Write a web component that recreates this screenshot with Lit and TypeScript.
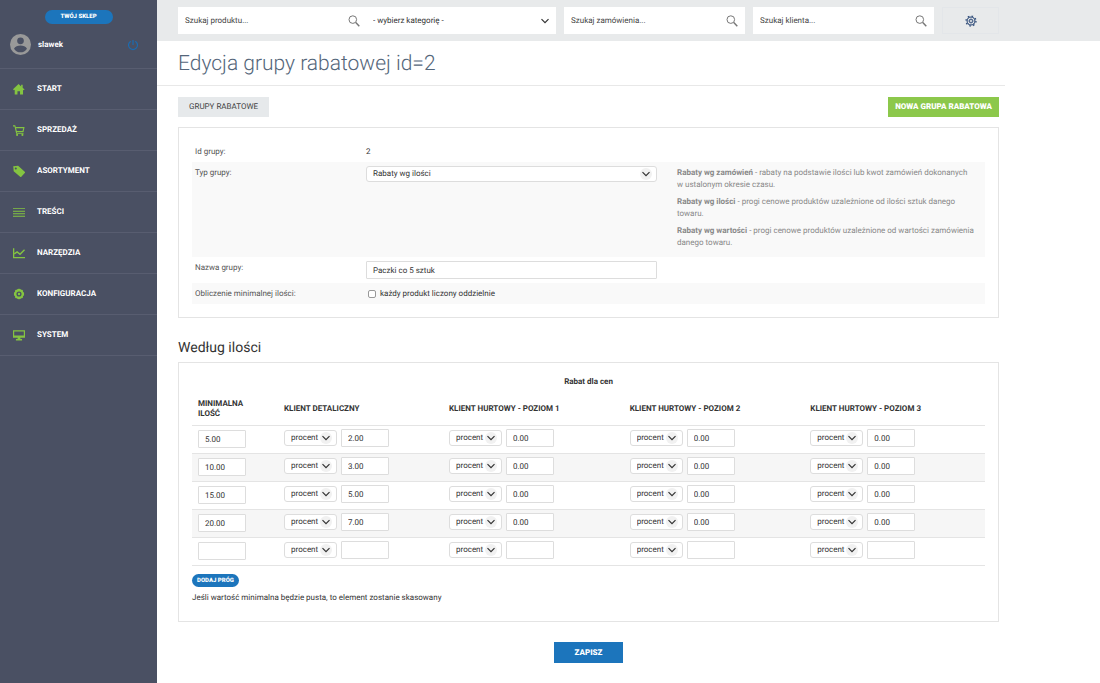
import { LitElement, html, css, svg, nothing } from "lit";
import { customElement, state } from "lit/decorators.js";

const icons = {
  home: svg`<path d="M0 7.200 6.500 1.200l3 2.800V2h1.800v3.600L13.500 7.600l-.9 1L11.700 7.800V13.500H8.200V9.500H5.200v4H2V7.800l-1 .8z"/>`,
  cart: svg`<path d="M0 1.500h2.600l.6 2h10.300L12.300 9.300H4.600l.2 1h7.500v1.200H3.700L1.800 2.800H0zM3.600 4.900l.8 3.200h6.700l.8-3.200z"/><circle cx="4.800" cy="12.700" r="1.200"/><circle cx="11" cy="12.700" r="1.200"/>`,
  tag: svg`<path d="M.3 1.600 6 1l7.700 7a1 1 0 0 1 0 1.400l-4 4.200a1 1 0 0 1-1.400 0L.8 7.200zM3.200 2.800a1.200 1.200 0 1 0 .1 2.400 1.200 1.200 0 0 0-.1-2.400z" fill-rule="evenodd"/>`,
  lines: svg`<path d="M0 2.500h14v1.100H0zm0 3h14v1.100H0zm0 3h14v1.100H0zm0 3h14v1.100H0z"/>`,
  chart: svg`<path d="M0 1.500h1.500v10.300H14v1.400H0z"/><path d="M1.500 8 4.800 5.800l3.400 2.700L13.500 3.200" fill="none" stroke="currentColor" stroke-width="1.700"/>`,
  cog: svg`<path d="m7 .8 1.600.3.8 1 1.300-.1 1.100 1.200-.2 1.300 1.100.8.3 1.700-.3 1.700-1.100.8.2 1.300-1.100 1.200-1.300-.1-.8 1-1.600.3-1.600-.3-.8-1-1.300.1-1.100-1.200.2-1.300-1.100-.8L1 7l.3-1.700 1.100-.8-.2-1.300L3.300 2l1.300.1.8-1zM7 4a3 3 0 1 0 0 6 3 3 0 0 0 0-6z" fill-rule="evenodd"/><circle cx="7" cy="7" r="1.400"/>`,
  screen: svg`<path d="M0 1.500h14v8.800H8.600v1.500h2V13.500H3.400v-1.700h2v-1.500H0zM1.400 2.800v4.700h11.200V2.800z" fill-rule="evenodd"/>`,
};

const menu = [
  { label: "START", icon: icons.home },
  { label: "SPRZEDAŻ", icon: icons.cart },
  { label: "ASORTYMENT", icon: icons.tag },
  { label: "TREŚCI", icon: icons.lines },
  { label: "NARZĘDZIA", icon: icons.chart },
  { label: "KONFIGURACJA", icon: icons.cog },
  { label: "SYSTEM", icon: icons.screen },
];

const help = [
  ["Rabaty wg zamówień", "rabaty na podstawie ilości lub kwot zamówień dokonanych w\u00a0ustalonym okresie czasu."],
  ["Rabaty wg ilości", "progi cenowe produktów uzależnione od ilości sztuk danego towaru."],
  ["Rabaty wg wartości", "progi cenowe produktów uzależnione od wartości zamówienia danego towaru."],
];

const levels = [
  "KLIENT DETALICZNY",
  "KLIENT HURTOWY - POZIOM 1",
  "KLIENT HURTOWY - POZIOM 2",
  "KLIENT HURTOWY - POZIOM 3",
];

const magnifier = html`<svg class="magnifier" viewBox="0 0 12 12" aria-hidden="true">
  <circle cx="4.800" cy="4.600" r="3.800" fill="none" stroke="currentColor" stroke-width="1"/>
  <path d="m7.800 7.600 3.500 3.600" stroke="currentColor" stroke-width="1.500"/>
</svg>`;

const chevron = html`<svg class="chevron" viewBox="0 0 12 12" aria-hidden="true">
  <circle class="halo" cx="6" cy="6" r="6"/>
  <path d="M2.500 4.200 6 7.700l3.500-3.500" fill="none" stroke="currentColor" stroke-width="1.200"/>
</svg>`;

@customElement("app-root")
export class AppRoot extends LitElement {
  @state() private thresholds: string[][] = [
    ["5.00", "2.00", "0.00", "0.00", "0.00"],
    ["10.00", "3.00", "0.00", "0.00", "0.00"],
    ["15.00", "5.00", "0.00", "0.00", "0.00"],
    ["20.00", "7.00", "0.00", "0.00", "0.00"],
    ["", "", "", "", ""],
  ];

  static styles = css`
    :host {
      display: flex;
      min-height: 100vh;
      background: #fff;
      color: #333;
      font: 8px/12px Roboto, "Liberation Sans", sans-serif;
      text-rendering: geometricPrecision;
    }
    *, *::before, *::after { box-sizing: border-box; }
    h1, h2, p, ul { margin: 0; padding: 0; }
    a { color: inherit; text-decoration: none; }
    input, select, button { font: inherit; color: inherit; margin: 0; text-rendering: inherit; }
    button { border: 0; cursor: pointer; }

    .sidebar {
      flex: 0 0 157px;
      background: #4a5063;
      color: #fff;
      font-weight: 700;
    }
    .account { height: 69px; padding-top: 10px; border-bottom: 1px solid #585d70; }
    .pill {
      display: block;
      border-radius: 8px;
      background: #1c75bc;
      color: #fff;
      font-size: 6px;
      font-weight: 900;
      text-align: center;
    }
    .shop { width: 68px; margin: 0 auto; line-height: 14px; }
    .user { display: flex; align-items: center; padding: 10px 18px 0 10px; }
    .avatar { width: 21px; height: 21px; margin-right: 7px; fill: #999; }
    .avatar .figure { fill: #4a5063; }
    .logout { display: flex; margin-left: auto; padding: 0; background: none; color: #1c6bb0; }
    .logout svg { width: 12px; height: 12px; }
    .menu { list-style: none; }
    .menu a {
      display: flex;
      align-items: center;
      gap: 12px;
      height: 41px;
      padding-left: 13px;
      border-bottom: 1px solid #585d70;
    }
    .menu svg { width: 12px; height: 12px; fill: currentColor; color: #84c441; }

    .main { flex: 1; min-width: 0; }
    .topbar { background: #e8eaeb; padding: 7px 21px; }
    .tools {
      display: grid;
      grid-template-columns: 378fr 181fr 181fr 57fr;
      gap: 8px;
      max-width: 821px;
    }
    .product { display: grid; grid-template-columns: 1fr 1fr; background: #fff; }
    .search { display: flex; align-items: center; background: #fff; padding: 0 7px; height: 27px; }
    .search input { flex: 1; min-width: 0; border: 0; padding: 0; outline: 0; background: none; }
    .search input::placeholder { color: #444; opacity: 1; }
    .magnifier { width: 12px; height: 12px; color: #777; }
    .settings { display: grid; place-items: center; background: none; border: 1px solid #e3e6e9; color: #34507c; }
    .settings svg { width: 12px; height: 12px; }

    .title {
      max-width: 848px;
      padding: 10px 21px 7px;
      border-bottom: 1px solid #e8e8e8;
      color: #54667a;
      font-size: 21px;
      font-weight: 300;
      line-height: 27px;
    }
    .content { max-width: 863px; padding: 11px 21px 20px; }
    .actions { display: flex; justify-content: space-between; margin-bottom: 10px; }
    .action { padding: 0 11px; line-height: 20px; background: #e6e9eb; color: #444; }
    .primary { padding: 0 7px; background: #8cc84b; color: #fff; font-weight: 900; }
    .panel { border: 1px solid #e4e4e4; padding: 13px; }

    .row {
      display: grid;
      grid-template-columns: 171fr 291fr 325fr;
      padding: 4px 3px;
    }
    .row:nth-child(even) { background: #f9f9f9; }
    .name, .value, .help, .choice { padding-top: 1px; }
    .name { color: #555; }
    .help { display: grid; gap: 5px; padding-bottom: 4px; padding-left: 20px; color: #888; }
    .text {
      width: 100%;
      height: 18px;
      padding: 0 6px;
      border: 1px solid #ddd;
      background: #fff;
      border-radius: 1px;
    }
    .choice { display: flex; align-items: center; gap: 4px; padding-left: 2px; }
    .choice input { width: 8px; height: 8px; appearance: none; border: 1px solid #999; border-radius: 2px; background: #fff; }
    .choice input:checked { background: #1c75bc; }

    .drop { display: grid; align-items: center; align-self: start; }
    .drop select {
      grid-area: 1 / 1;
      width: 100%;
      height: 16px;
      padding: 0 6px;
      appearance: none;
      border: 1px solid #ddd;
      border-radius: 3px;
      background: #fff;
    }
    .drop .chevron { grid-area: 1 / 1; justify-self: end; width: 12px; height: 12px; margin-right: 5px; pointer-events: none; }
    .halo { fill: #f1f1f1; }
    .category select { height: 27px; border: 0; }
    .category .halo { fill: none; }

    h2 { margin: 21px 0 5px; font-size: 14px; font-weight: 400; line-height: 18px; }
    table { width: 100%; table-layout: fixed; border-collapse: collapse; }
    .first { width: 86px; }
    .second { width: 165px; }
    caption { height: 12px; font-weight: 700; }
    th { height: 37px; padding: 6px 6px 0; text-align: left; line-height: 10px; vertical-align: middle; }
    th:first-child { padding-right: 20px; }
    td { height: 28px; padding: 2px 6px 4px; vertical-align: middle; border-top: 1px solid #e4e4e4; }
    td:first-child { padding: 3px 6px; }
    tbody tr:last-child td { border-bottom: 1px solid #e4e4e4; }
    tbody tr:nth-child(even) { background: #f6f6f6; }
    .discount { display: flex; align-items: center; gap: 4px; }
    .discount .drop { width: 53px; align-self: center; }
    .amount { display: block; width: 48px; }
    .add { width: 47px; margin: 8px 0 5px; padding: 0; line-height: 13px; }
    .note { margin-bottom: 4px; }
    .save {
      display: block;
      width: 69px;
      margin: 20px auto 0;
      padding: 0;
      line-height: 21px;
      background: #1c75bc;
      color: #fff;
      font-weight: 900;
    }
  `;

  private addThreshold() {
    this.thresholds = [...this.thresholds, ["", "", "", "", ""]];
  }

  private search(label: string) {
    return html`<label class="search">
      <input type="search" placeholder=${label} aria-label=${label} />${magnifier}
    </label>`;
  }

  render() {
    return html`
      <aside class="sidebar">
        <div class="account">
          <a class="pill shop" href="#">TWÓJ SKLEP</a>
          <div class="user">
            <svg class="avatar" viewBox="0 0 22 22" aria-hidden="true">
              <circle cx="11" cy="11" r="11"/>
              <circle class="figure" cx="11" cy="7.200" r="3.500"/>
              <path class="figure" d="M4.200 15.500c1-2.700 4.200-3.500 6.800-3.500s5.800.8 6.800 3.500a8.100 8.100 0 0 1-13.600 0z"/>
            </svg>
            <span>slawek</span>
            <button class="logout" aria-label="Wyloguj">
              <svg viewBox="0 0 12 12" fill="none" stroke="currentColor" stroke-width="1.200"><path d="M3.700 2.200a4.500 4.500 0 1 0 4.600 0M6 1v5"/></svg>
            </button>
          </div>
        </div>
        <nav>
          <ul class="menu">
            ${menu.map((m) => html`<li><a href="#"><svg viewBox="0 0 14 14" aria-hidden="true">${m.icon}</svg>${m.label}</a></li>`)}
          </ul>
        </nav>
      </aside>
      <main class="main">
        <div class="topbar">
          <div class="tools">
            <div class="product">
              ${this.search("Szukaj produktu...")}
              <label class="drop category">
                <select aria-label="Kategoria"><option>- wybierz kategorię -</option></select>${chevron}
              </label>
            </div>
            ${this.search("Szukaj zamówienia...")}
            ${this.search("Szukaj klienta...")}
            <button class="settings" aria-label="Ustawienia">
              <svg viewBox="0 0 14 14" fill="none" stroke="currentColor">
                <circle cx="7" cy="7" r="4.600" stroke-width="1.200"/><circle cx="7" cy="7" r="1.800"/>
                <circle cx="7" cy="7" r="5.800" stroke-width="1.600" stroke-dasharray="1.800 2.755"/>
                <path d="M7 2.500v2.800M7 8.700v2.800M2.500 7h2.800M8.700 7h2.800M3.800 3.800l2 2M8.200 8.200l2 2M3.800 10.200l2-2M8.200 5.800l2-2" stroke-width=".7"/>
              </svg>
            </button>
          </div>
        </div>
        <h1 class="title">Edycja grupy rabatowej id=2</h1>
        <div class="content">
          <div class="actions">
            <a class="action" href="#">GRUPY RABATOWE</a>
            <a class="action primary" href="#">NOWA GRUPA RABATOWA</a>
          </div>
          <section class="panel">
            <div class="row"><span class="name">Id grupy:</span><span class="value">2</span></div>
            <div class="row">
              <label class="name" for="type">Typ grupy:</label>
              <div class="drop">
                <select id="type"><option>Rabaty wg zamówień</option><option selected>Rabaty wg ilości</option><option>Rabaty wg wartości</option></select>${chevron}
              </div>
              <div class="help">${help.map(([t, d]) => html`<p><b>${t}</b> - ${d}</p>`)}</div>
            </div>
            <div class="row">
              <label class="name" for="name">Nazwa grupy:</label>
              <input class="text" id="name" value="Paczki co 5 sztuk" />
            </div>
            <div class="row">
              <span class="name">Obliczenie minimalnej ilości:</span>
              <label class="choice"><input type="checkbox" />każdy produkt liczony oddzielnie</label>
            </div>
          </section>
          <h2>Według ilości</h2>
          <section class="panel">
            <table>
              <caption>Rabat dla cen</caption>
              <colgroup><col class="first" /><col class="second" /><col /><col /><col /></colgroup>
              <thead>
                <tr><th scope="col">MINIMALNA ILOŚĆ</th>${levels.map((l) => html`<th scope="col">${l}</th>`)}</tr>
              </thead>
              <tbody>
                ${this.thresholds.map((row) => html`<tr>
                  ${row.map((v, i) => html`<td>${i === 0
                    ? html`<input class="text amount" aria-label="Minimalna ilość" .value=${v} />`
                    : html`<div class="discount">
                        <div class="drop"><select aria-label="Rodzaj rabatu"><option>procent</option><option>kwota</option></select>${chevron}</div>
                        <input class="text amount" aria-label=${levels[i - 1] ?? nothing} .value=${v} />
                      </div>`}</td>`)}
                </tr>`)}
              </tbody>
            </table>
            <button class="pill add" @click=${this.addThreshold}>DODAJ PRÓG</button>
            <p class="note">Jeśli wartość minimalna będzie pusta, to element zostanie skasowany</p>
          </section>
          <button class="save">ZAPISZ</button>
        </div>
      </main>
    `;
  }
}
